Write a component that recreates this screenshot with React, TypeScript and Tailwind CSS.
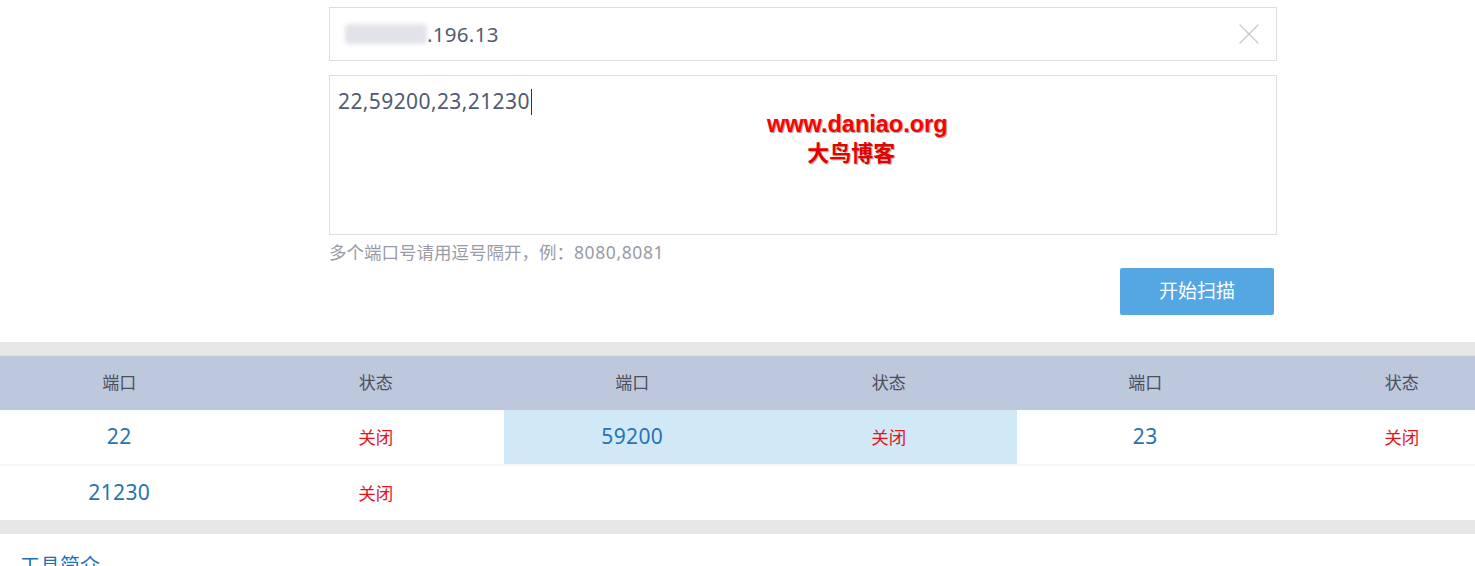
import { X } from 'lucide-react';

const font = { fontFamily: '"Noto Sans", "Noto Sans CJK SC", sans-serif' };

interface PortResult {
  port: string;
  status: string;
  active?: boolean;
}

const rows: PortResult[][] = [
  [
    { port: '22', status: '关闭' },
    { port: '59200', status: '关闭', active: true },
    { port: '23', status: '关闭' },
  ],
  [{ port: '21230', status: '关闭' }],
];

function ResultCell({ item }: { item: PortResult }) {
  return (
    <div className={`flex w-[513px] h-[54px] items-center ${item.active ? 'bg-[#d1e9f7]' : ''}`}>
      <div className="w-1/2 text-center text-[21px] tracking-[0.4px] text-[#2873b3]">{item.port}</div>
      <div className="w-1/2 text-center text-[17.5px] text-[#e5141b]">{item.status}</div>
    </div>
  );
}

export default function App() {
  return (
    <div className="w-[1475px] h-[566px] overflow-hidden bg-white" style={font}>
      <div className="ml-[329px] w-[948px] pt-[7px]">
        <div className="flex h-[54px] items-center border border-[#dcdfe6] pl-[15px] pr-[9px]">
          <span className="inline-block w-[82px] h-[20px] rounded-sm bg-[#e2e3ea] blur-[2px]" />
          <span className="text-[20.5px] tracking-[0.3px] text-[#525a72]">.196.13</span>
          <X className="ml-auto text-[#c4c7cf]" size={36} strokeWidth={0.8} />
        </div>
        <div className="relative mt-[14px] h-[160px] border border-[#dcdfe6] px-[8px] pt-[10px]">
          <div className="flex items-center text-[21px] tracking-[0.4px] text-[#525a72]">
            22,59200,23,21230
            <span className="ml-px inline-block w-px h-[26px] bg-[#333]" />
          </div>
          <div className="absolute left-[437px] top-[37px] flex flex-col items-center leading-none">
            <span
              className="text-[23.5px] font-bold text-[#ff0000]"
              style={{ fontFamily: '"Liberation Sans", Arial, sans-serif', textShadow: '1px 1px 1px #999' }}
            >
              www.daniao.org
            </span>
            <span
              className="mt-[4px] ml-[-12px] text-[22px] font-bold text-[#e60000]"
              style={{ textShadow: '1px 1px 1px #aaa' }}
            >
              大鸟博客
            </span>
          </div>
        </div>
        <div className="mt-[5px] text-[17.5px] leading-[24px] text-[#999ca6]">
          多个端口号请用逗号隔开，例：<span className="tracking-[0.6px]">8080,8081</span>
        </div>
        <div className="mt-[4px] flex justify-end pr-[3px]">
          <button className="w-[154px] h-[47px] rounded-[2px] bg-[#55a7e3] text-[19px] text-white">
            开始扫描
          </button>
        </div>
      </div>

      <div className="mt-[27px] h-[13px] bg-[#e6e6e6]" />
      <div className="ml-[-9px] w-[1539px]">
        <div className="flex h-[55px] items-center bg-[#bec8dc] border-t border-[#d3e6de] text-[17px] text-[#4a4f5c]">
          {['端口', '状态', '端口', '状态', '端口', '状态'].map((h, i) => (
            <div key={i} className="w-[256.5px] text-center">
              {h}
            </div>
          ))}
        </div>
        {rows.map((row, i) => (
          <div key={i} className={`flex ${i > 0 ? 'border-t-2 border-[#f7f7f7]' : ''}`}>
            {row.map((item) => (
              <ResultCell key={item.port} item={item} />
            ))}
          </div>
        ))}
      </div>
      <div className="h-[14px] bg-[#e6e6e6]" />
      <div className="pl-[20px] pt-[17px] text-[20px] text-[#1d6fb8]">工具简介</div>
    </div>
  );
}
